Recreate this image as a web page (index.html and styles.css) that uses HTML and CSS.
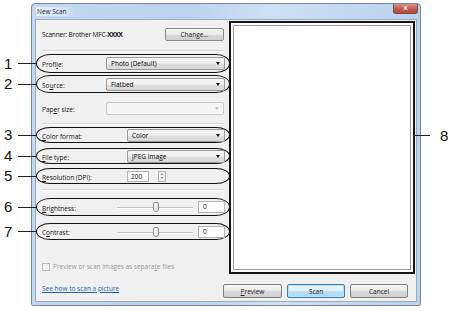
FILE: index.html
```html
<!DOCTYPE html>
<html>
<head>
<meta charset="utf-8">
<link rel="stylesheet" href="styles.css">
</head>
<body>
<div class="page">
  <div class="window">
    <div class="titlebar">
      <span class="title">New Scan</span>
      <span class="close">x</span>
    </div>
    <div class="client">
      <div class="top">
        <div class="left">
          <div class="scanner-row">
            <span class="scanner">Scanner: Brother MFC-<b class="xx">XXXX</b></span>
            <span class="btn change">Change...</span>
          </div>
          <div class="sep sep1"></div>

          <div class="row oval o-profile">
            <span class="callout"><span class="num">1</span><span class="line"></span></span>
            <span class="lbl w64">Profi<u>l</u>e:</span>
            <span class="combo c-wide">Photo (Default)<i class="arrow"></i></span>
          </div>
          <div class="row oval o-source">
            <span class="callout"><span class="num">2</span><span class="line"></span></span>
            <span class="lbl w64">So<u>u</u>rce:</span>
            <span class="combo c-wide">Flatbed<i class="arrow"></i></span>
          </div>
          <div class="row plain r-paper">
            <span class="lbl w64">Pap<u>e</u>r size:</span>
            <span class="combo c-wide disabled"><i class="arrow"></i></span>
          </div>
          <div class="sep sep2"></div>

          <div class="row oval o-color">
            <span class="callout"><span class="num">3</span><span class="line"></span></span>
            <span class="lbl w85"><u>C</u>olor format:</span>
            <span class="combo c-narrow">Color<i class="arrow"></i></span>
          </div>
          <div class="row oval o-file">
            <span class="callout"><span class="num">4</span><span class="line"></span></span>
            <span class="lbl w85"><u>F</u>ile type:</span>
            <span class="combo c-narrow">JPEG Image<i class="arrow"></i></span>
          </div>
          <div class="row oval o-res">
            <span class="callout"><span class="num">5</span><span class="line"></span></span>
            <span class="lbl w85"><u>R</u>esolution (DPI):</span>
            <span class="field f-res">200</span>
            <span class="spin"><i class="up"></i><i class="down"></i></span>
          </div>
          <div class="sep sep3"></div>

          <div class="row oval o-bright">
            <span class="callout"><span class="num">6</span><span class="line"></span></span>
            <span class="lbl w73"><u>B</u>rightness:</span>
            <span class="slider"><span class="track"></span><span class="thumb"></span></span>
            <span class="field f-val">0</span>
          </div>
          <div class="row oval o-contrast">
            <span class="callout"><span class="num">7</span><span class="line"></span></span>
            <span class="lbl w73">C<u>o</u>ntrast:</span>
            <span class="slider"><span class="track"></span><span class="thumb"></span></span>
            <span class="field f-val">0</span>
          </div>

          <div class="check-row">
            <span class="checkbox"></span>
            <span class="check-lbl">Preview or scan images as separa<u>t</u>e files</span>
          </div>
        </div>
        <div class="right">
          <div class="preview">
            <div class="preview-inner"></div>
            <span class="callout8"><span class="line"></span><span class="num">8</span></span>
          </div>
        </div>
      </div>
      <div class="bottom">
        <span class="link">See how to scan a picture</span>
        <div class="buttons">
          <span class="btn b-preview"><u>P</u>review</span>
          <span class="btn b-scan">Scan</span>
          <span class="btn b-cancel">Cancel</span>
        </div>
      </div>
    </div>
  </div>
</div>
</body>
</html>
```

FILE: styles.css
```css
html, body {
  margin: 0;
  padding: 0;
  background: #ffffff;
}
body {
  width: 450px;
  height: 311px;
  overflow: hidden;
  font-family: "Open Sans", "Noto Sans", "DejaVu Sans", sans-serif;
  font-size: 6.5px;
  color: #1a1a1a;
}
.page {
  padding: 3px 0 0 31px;
}
.window {
  border: 1px solid #7a8797;
  border-radius: 4px 4px 2px 2px;
  background: linear-gradient(90deg, #c3d8ef 0%, #bad2ee 40%, #cfe0f4 62%, #c8dcf2 72%, #b9d1ec 100%);
  display: flex;
  flex-direction: column;
  padding: 0 3px 3px 3px;
  box-sizing: content-box;
  width: 382px;
  height: 298px;
}
.titlebar {
  height: 14px;
  flex: none;
  display: flex;
  align-items: flex-start;
  justify-content: space-between;
}
.title {
  margin-top: 3px;
  margin-left: 1px;
  padding: 0 8px 0 1px;
  font-size: 6.5px;
  color: #1c2a3a;
  background: linear-gradient(90deg, rgba(255,255,255,0.6), rgba(255,255,255,0.3) 75%, rgba(255,255,255,0));
  line-height: 9px;
}
.close {
  width: 25px;
  height: 10px;
  margin-right: -1px;
  border: 1px solid #7d4a45;
  border-top: none;
  border-radius: 0 0 3px 3px;
  background: linear-gradient(#d9928a, #c25b4f 55%, #b5493d);
  color: #f4e8e6;
  font-size: 7px;
  line-height: 9px;
  text-align: center;
  font-weight: bold;
  font-family: "DejaVu Sans", sans-serif;
  box-sizing: border-box;
}
.client {
  flex: 1;
  background: #f0f0f0;
  border: 1px solid #9aaac0;
  margin-top: 1px;
  display: flex;
  flex-direction: column;
}
.top {
  display: grid;
  grid-template-columns: 193px 186px;
}
.left {
  display: flex;
  flex-direction: column;
  padding-top: 8px;
}
.scanner-row {
  height: 13px;
  display: flex;
  align-items: center;
  justify-content: space-between;
  padding: 0 5px 0 6px;
}
.scanner {
  font-size: 6.5px;
  color: #111;
  letter-spacing: -0.15px;
}
.xx {
  font-weight: bold;
  letter-spacing: -0.6px;
}
.btn {
  display: flex;
  align-items: center;
  justify-content: center;
  border: 1px solid #8a8a8a;
  border-radius: 2px;
  background: linear-gradient(#f6f6f6 0%, #e9e9e9 50%, #d9d9d9 51%, #cfcfcf 100%);
  color: #222;
  box-sizing: border-box;
  font-size: 6.5px;
}
.change {
  width: 59px;
  height: 13px;
}
.sep {
  height: 0;
  border-top: 1px solid #d7d7d7;
  border-bottom: 1px solid #ffffff;
  margin-left: 6px;
  margin-right: 5px;
}
.sep1 { margin-top: 9px; }
.sep2 { margin-top: 8px; }
.sep3 { margin-top: 5px; }

.row {
  position: relative;
  display: flex;
  align-items: center;
  box-sizing: border-box;
}
.oval {
  border: 1.5px solid #111;
  border-radius: 14px / 50%;
  margin-right: -1px;
  padding-left: 5px;
  padding-right: 4px;
}
.plain {
  padding-left: 6px;
  padding-right: 5px;
}
.o-profile { height: 19px; margin-top: 2px; }
.o-source { height: 18px; margin-top: 2px; }
.r-paper { height: 14px; margin-top: 8px; }
.o-color { height: 16px; margin-top: 2px; }
.o-file { height: 16px; margin-top: 5px; }
.o-res { height: 16px; margin-top: 4px; }
.o-bright { height: 18px; margin-top: 7px; }
.o-contrast { height: 17px; margin-top: 7px; }

.lbl {
  flex: none;
  color: #111;
  padding-top: 2px;
}
.w64 { width: 64px; }
.w85 { width: 85px; }
.w73 { width: 73px; }

.combo {
  flex: 1;
  position: relative;
  height: 13px;
  border: 1px solid #9a9a9a;
  border-radius: 2px;
  background: linear-gradient(#f7f7f7 0%, #eeeeee 50%, #dedede 51%, #d8d8d8 100%);
  box-sizing: border-box;
  padding-left: 4px;
  font-size: 6.5px;
  line-height: 11px;
  color: #000;
}
.combo.disabled {
  background: #f4f4f4;
  border-color: #c9c9c9;
}
.arrow {
  position: absolute;
  right: 4px;
  top: 4px;
  width: 0;
  height: 0;
  border-left: 2.5px solid transparent;
  border-right: 2.5px solid transparent;
  border-top: 3px solid #111;
}
.disabled .arrow {
  border-top-color: #b8b8b8;
}
.field {
  height: 11px;
  background: #ffffff;
  border: 1px solid #b5b5b5;
  box-sizing: border-box;
  font-size: 6.5px;
  line-height: 9px;
  padding-left: 3px;
  color: #111;
}
.f-res { width: 22px; }
.spin {
  display: flex;
  flex-direction: column;
  width: 8px;
  height: 11px;
  margin-left: 9px;
  border: 1px solid #b5b5b5;
  box-sizing: border-box;
  background: #eef1f5;
  align-items: center;
  justify-content: space-around;
}
.spin .up {
  width: 0; height: 0;
  border-left: 1.5px solid transparent;
  border-right: 1.5px solid transparent;
  border-bottom: 2px solid #777;
}
.spin .down {
  width: 0; height: 0;
  border-left: 1.5px solid transparent;
  border-right: 1.5px solid transparent;
  border-top: 2px solid #777;
}
.slider {
  position: relative;
  width: 80px;
  height: 12px;
  margin-right: 3px;
}
.track {
  position: absolute;
  left: 2px;
  right: 2px;
  top: 6px;
  height: 0;
  border-top: 1px solid #c2c2c2;
  border-bottom: 1px solid #ffffff;
}
.thumb {
  position: absolute;
  left: 38px;
  top: 1px;
  width: 6px;
  height: 10px;
  border: 1px solid #8c8c8c;
  border-radius: 2px 2px 3px 3px;
  background: linear-gradient(90deg, #fafafa, #e3e3e3);
  box-sizing: border-box;
}
.f-val {
  flex: 1;
  height: 12px;
  padding-left: 4px;
  line-height: 10px;
}

.callout {
  position: absolute;
  left: -34px;
  top: 50%;
  width: 33px;
  height: 14px;
  margin-top: -7px;
  display: flex;
  align-items: center;
}
.num {
  font-family: "Liberation Sans", Arial, sans-serif;
  font-size: 15px;
  line-height: 14px;
  color: #111;
  width: 14px;
  padding-left: 1px;
}
.callout .line,
.callout8 .line {
  flex: 1;
  height: 1px;
  background: #222;
}

.check-row {
  display: flex;
  align-items: center;
  margin-top: 22px;
  padding-left: 6px;
  height: 9px;
}
.checkbox {
  width: 6px;
  height: 6px;
  border: 1px solid #b9b9b9;
  background: #f3f3f3;
  margin-right: 3px;
}
.check-lbl {
  color: #9a9a9a;
}

.right {
  padding-top: 1px;
}
.preview {
  position: relative;
  height: 253px;
  border: 2px solid #151515;
  background: #ffffff;
  box-sizing: border-box;
  padding: 2px;
}
.preview-inner {
  height: 100%;
  border: 1px solid #9c9c9c;
  box-sizing: border-box;
}
.callout8 {
  position: absolute;
  left: 100%;
  top: 50%;
  margin-top: -19px;
  width: 36px;
  height: 14px;
  display: flex;
  align-items: center;
}
.callout8 .line {
  flex: none;
  width: 17px;
}
.callout8 .num {
  width: auto;
  padding-left: 10px;
}

.bottom {
  display: flex;
  justify-content: space-between;
  align-items: center;
  margin-top: 10px;
  padding-left: 6px;
  padding-right: 8px;
}
.link {
  color: #1f5fb8;
  text-decoration: underline;
  margin-top: -6px;
}
.buttons {
  display: flex;
  gap: 5px;
}
.buttons .btn {
  height: 14px;
  width: 59px;
  border-color: #7f7f7f;
}
.b-scan {
  width: 58px !important;
  background: linear-gradient(#e8f4fc 0%, #dbeefa 50%, #bfe1f7 51%, #a9d5f3 100%) !important;
  border-color: #3c7fb1 !important;
  box-shadow: inset 0 0 0 1px #b6e2fb;
}
.b-cancel { width: 58px !important; }
```
